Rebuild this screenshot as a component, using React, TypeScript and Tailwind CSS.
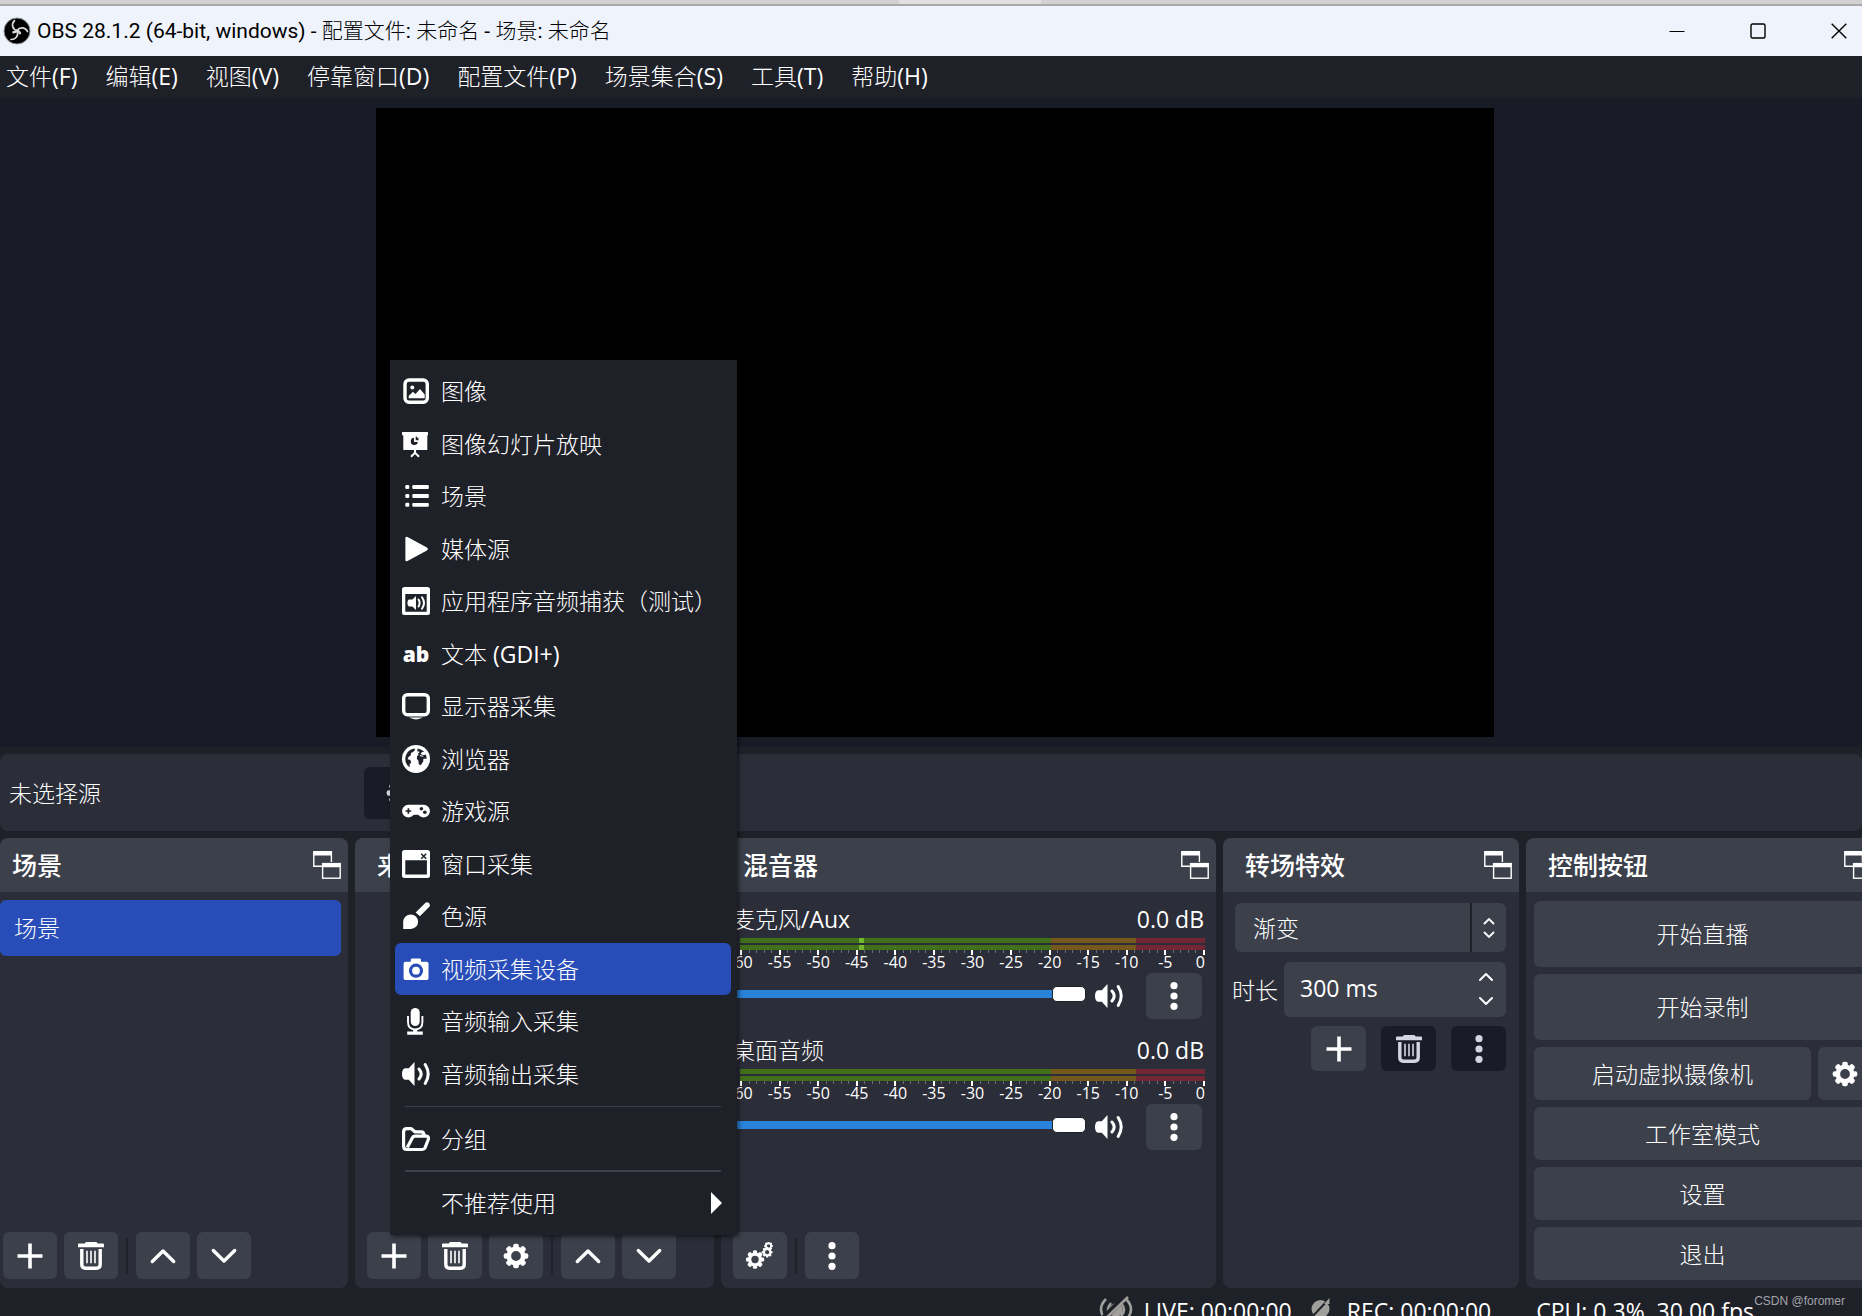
import { useState, type ReactNode } from 'react'

const MENUS = ['文件(F)', '编辑(E)', '视图(V)', '停靠窗口(D)', '配置文件(P)', '场景集合(S)', '工具(T)', '帮助(H)']

const SCALE = Array.from({ length: 13 }, (_, i) => i * 5 - 60)
const TICKS = Array.from({ length: 61 }, (_, i) => i)
const TEETH = [0, 45, 90, 135, 180, 225, 270, 315]

/* ---------- icons ---------- */

function Svg({ children, className = 'h-7 w-7' }: { children: ReactNode; className?: string }) {
  return (
    <svg viewBox="0 0 28 28" className={`shrink-0 ${className}`} fill="currentColor" aria-hidden="true">
      {children}
    </svg>
  )
}

function ObsLogo() {
  return (
    <svg viewBox="0 0 28 28" className="h-7 w-7 shrink-0" aria-hidden="true">
      <circle cx="14" cy="14" r="13" fill="#000" stroke="#8b8b8b" />
      <g fill="none" stroke="#dcdcdc" strokeWidth="1.7" strokeLinecap="round">
        <path d="M11.500 3.600C8 7 9.400 12.500 14 13.600M14 13.600C17 9.500 22.500 10 24.500 14.500M14 13.600C16 18.500 13 22.500 8 22.500" />
        <path d="M14 13.600q-1 1.500-3.500 1.700M14 13.600q2 .3 3 2.600" strokeWidth="2.400" />
      </g>
    </svg>
  )
}

const Popout = () => (
  <Svg>
    <g fill="none" stroke="currentColor" strokeWidth="1.4">
      <path d="M9 15.3H.8V.8h17.6V11" />
      <rect x="9.6" y="12.6" width="17.6" height="14.6" />
    </g>
    <path d="M.5.5h18v4H.5zM9.5 12h18v4.300h-18z" />
  </Svg>
)

const Plus = () => (
  <Svg>
    <path d="M12.200 1.500h3.600v10.700h10.700v3.600H15.800v10.700h-3.600V15.800H1.500v-3.600h10.700z" />
  </Svg>
)

const Trash = () => (
  <Svg>
    <path d="M9 0h10.500l1.200 1.600H26a1 1 0 0 1 1 1v2.600H1V2.600a1 1 0 0 1 1-1h5.800z" />
    <path d="M4.800 7v15.500q0 3.700 3.700 3.700h11q3.700 0 3.700-3.700V7" fill="none" stroke="currentColor" strokeWidth="3.400" />
    <path d="M10 8.700v12.500M14 8.700v12.500M18 8.700v12.500" stroke="currentColor" strokeWidth="1.600" />
  </Svg>
)

const GearShape = () => (
  <>
    <circle cx="14" cy="14" r="7.200" fill="none" stroke="currentColor" strokeWidth="4.600" />
    {TEETH.map((r) => (
      <rect key={r} x="11.200" y="1.700" width="5.600" height="5" rx="2" transform={`rotate(${r} 14 14)`} />
    ))}
  </>
)

const Gear = () => (
  <Svg>
    <GearShape />
  </Svg>
)

const Gears = () => (
  <Svg>
    <g transform="translate(-1.500 7) scale(.75)"><GearShape /></g>
    <g transform="translate(15 4) scale(.44)"><GearShape /></g>
    <g transform="translate(17.500 -1) scale(.36)"><GearShape /></g>
  </Svg>
)

const ChevronUp = () => (
  <Svg>
    <path d="M3.300 19.500 14 9l10.700 10.500" fill="none" stroke="currentColor" strokeWidth="3.400" strokeLinecap="round" strokeLinejoin="round" />
  </Svg>
)

const ChevronDown = () => (
  <Svg>
    <path d="M3.300 8.500 14 19l10.700-10.500" fill="none" stroke="currentColor" strokeWidth="3.400" strokeLinecap="round" strokeLinejoin="round" />
  </Svg>
)

const Dots = () => (
  <Svg>
    <circle cx="14" cy="3.700" r="3.600" />
    <circle cx="14" cy="14" r="3.600" />
    <circle cx="14" cy="24.300" r="3.600" />
  </Svg>
)

const Speaker = () => (
  <Svg>
    <path d="M12.500 2v24L6.800 19.800H3.200Q0 19.300 0 14t3.200-5.800h3.600z" />
    <path d="M17 9q4.400 5 0 10M23.200 4.500q6 9.500 0 19" fill="none" stroke="currentColor" strokeWidth="3" strokeLinecap="round" />
  </Svg>
)

const ImageIcon = () => (
  <Svg>
    <rect x="3" y="3" width="22.300" height="22.300" rx="4" fill="none" stroke="currentColor" strokeWidth="3.400" />
    <circle cx="10.300" cy="10.600" r="2" />
    <path d="M6.700 21.300v-2.400l4.200-4.200 2.600 2.300 4.500-5 4.700 5.600v3.700z" />
  </Svg>
)

const Slideshow = () => (
  <Svg>
    <path d="M0 2.600Q0 2 .6 2h24.800q.6 0 .6.600v2.700h-.7V20H1.300V5.300H0z" />
    <path d="M13 20v3.600M13 22.800 9 26.800M13 22.800l4 4" stroke="currentColor" strokeWidth="2" fill="none" />
    <path d="M12 7.800a3.600 3.600 0 1 0 3.900 4.200H12z" fill="#1f2129" />
    <path d="M13.700 10.300V6.500h1.200v1.200h1.600v2.600z" fill="#1f2129" />
  </Svg>
)

const ListIcon = () => (
  <Svg>
    {[5, 14, 22.8].map((y) => (
      <g key={y}>
        <rect x="3.300" y={y - 2} width="4" height="4" rx="1.300" />
        <rect x="10.300" y={y - 1.9} width="16.500" height="3.800" rx="1" />
      </g>
    ))}
  </Svg>
)

const PlayIcon = () => (
  <Svg>
    <path d="M3.400 3.300Q3.400 1 5.500 2.100l19.400 10.500q1.900 1.400 0 2.800L5.500 25.900q-2.100 1.100-2.100-1.200z" />
  </Svg>
)

const AppAudio = () => (
  <Svg>
    <path fillRule="evenodd" d="M2.500 0h23A2.500 2.500 0 0 1 28 2.500v23a2.500 2.500 0 0 1-2.500 2.500h-23A2.500 2.500 0 0 1 0 25.500v-23A2.500 2.500 0 0 1 2.500 0zM3.300 7v17.800h21.400V7z" />
    <path d="M14 9v14l-3.600-3.400H6.800Q5.400 19 5.400 16t1.400-3.500h3.600z" />
    <path d="M16.500 12.500q2.300 3.500 0 7M20 10.300q4 5.700 0 11.400" fill="none" stroke="currentColor" strokeWidth="2" strokeLinecap="round" />
  </Svg>
)

const TextIcon = () => (
  <span aria-hidden="true" className="flex h-7 w-7 shrink-0 items-center justify-center font-['Open_Sans'] text-[21px] leading-7 font-extrabold">
    ab
  </span>
)

const Display = () => (
  <Svg>
    <rect x="1.700" y="2.700" width="24.600" height="20" rx="3.600" fill="none" stroke="currentColor" strokeWidth="3.400" />
    <path d="M7 25.600h14q-7 3.600-14 0z" />
  </Svg>
)

const Globe = () => (
  <Svg>
    <circle cx="14" cy="14" r="14" />
    <path
      fill="#1f2129"
      d="M9.700 4.300 12.500 3.400l.6 1.600-2.300 2.300-1.700.5-.4 2.500-2.400 1.900-.6 2 2.700.7.800 2.700-1.600 1.700.1 3.300Q3.300 19.300 3.300 14q.3-7 6.400-9.700z"
    />
    <path
      fill="#1f2129"
      d="M15.500 3.400q4.300.6 6.700 3.400l-2.500.5-1 1.700 2.600 1.300 2.400-.9q.9 2 .9 4.300l-3.200.1-.2 2.700-2.400 3.700-2.100-.9-.2-3.600-1.700-2 .3-2.800 1.500-1.200-1.300-2.400z"
    />
    <circle cx="16.200" cy="7.300" r="1.100" />
    <path d="m17.800 10.500 3.400.8" stroke="#fff" strokeWidth="1" />
  </Svg>
)

const Gamepad = () => (
  <Svg>
    <path d="M6.500 7.800h15a6.300 6.300 0 1 1-4.400 10.700q-.8-.8-1.500-.8h-3.200q-.7 0-1.500.8A6.300 6.300 0 1 1 6.500 7.800z" />
    <path d="M6.400 11.200v5.600M3.600 14h5.600" stroke="#1f2129" strokeWidth="1.700" />
    <circle cx="19.400" cy="11.800" r="1.800" fill="#1f2129" />
    <circle cx="22.800" cy="15.200" r="1.800" fill="#1f2129" />
  </Svg>
)

const WindowIcon = () => (
  <Svg>
    <path fillRule="evenodd" d="M2.500 0h23A2.500 2.500 0 0 1 28 2.500v23a2.500 2.500 0 0 1-2.500 2.500h-23A2.500 2.500 0 0 1 0 25.500v-23A2.500 2.500 0 0 1 2.500 0zM3.300 10.200v14.300h21.600V10.200z" />
    <path d="m19.200 3.800 5 5M24.200 3.800l-5 5" stroke="#1f2129" strokeWidth="1.500" />
  </Svg>
)

const Brush = () => (
  <Svg>
    <path d="M23.500.8q1.700-1.200 3.400.3 1.700 1.700.5 3.600l-9.500 9.500-4.200-3.700z" />
    <path d="M1.200 27V19.600a7.500 7.500 0 0 1 7.600-7.200 7.300 7.300 0 0 1 0 14.600z" />
  </Svg>
)

const Camera = () => (
  <Svg>
    <path d="M3.500 6.700h5.300V4.600q0-1.200 1.300-1.200h7.600q1.300 0 1.300 1.200v2.100h5.500q2 0 2 1.900v14.600q0 1.900-2 1.900h-21q-1.900 0-1.900-1.900V8.600q0-1.900 1.900-1.900z" />
    <circle cx="14" cy="15.700" r="5.500" fill="none" stroke="#284cb8" strokeWidth="3.200" />
  </Svg>
)

const Mic = () => (
  <Svg>
    <rect x="8.700" y="1" width="9" height="18" rx="4.500" />
    <path d="M6 9v6q0 7.400 7.200 7.400T20.400 15V9" fill="none" stroke="currentColor" strokeWidth="1.900" />
    <path d="M11.200 22h4v2.600h5.600v3.100H5.200v-3.100h6z" />
  </Svg>
)

const Folder = () => (
  <Svg>
    <g fill="none" stroke="currentColor" strokeWidth="3.200" strokeLinejoin="round">
      <path d="M5 24.500q-3.400 0-3.400-3.300V6.800q0-3.200 3.200-3.200h4.500l3.600 3.200h6.300q2.800 0 2.800 3.600" />
      <path d="M4.500 24.500h15.900q1.900 0 2.700-1.900l3.200-8.100q.7-3-1.700-3.300H13.300q-2 0-3 1.700L5.300 22.500" />
    </g>
  </Svg>
)

/* ---------- source menu ---------- */

const SOURCES = [
  { label: '图像', icon: ImageIcon },
  { label: '图像幻灯片放映', icon: Slideshow },
  { label: '场景', icon: ListIcon },
  { label: '媒体源', icon: PlayIcon },
  { label: '应用程序音频捕获（测试）', icon: AppAudio },
  { label: '文本 (GDI+)', icon: TextIcon },
  { label: '显示器采集', icon: Display },
  { label: '浏览器', icon: Globe },
  { label: '游戏源', icon: Gamepad },
  { label: '窗口采集', icon: WindowIcon },
  { label: '色源', icon: Brush },
  { label: '视频采集设备', icon: Camera },
  { label: '音频输入采集', icon: Mic },
  { label: '音频输出采集', icon: Speaker },
]

function SourceMenu() {
  const [active, setActive] = useState('视频采集设备')
  return (
    <div role="menu" className="absolute bottom-[53px] left-[35px] z-20 w-[347px] bg-[#1f2129] pt-[5px] pr-[6px] pb-[6px] pl-[5px] shadow-[2px_2px_4px_rgba(0,0,0,0.5)]">
      <div className="flex h-[735px] flex-col">
        {SOURCES.map(({ label, icon: Icon }) => (
          <button
            key={label}
            role="menuitem"
            onMouseEnter={() => setActive(label)}
            className={`flex flex-1 items-center gap-[11px] rounded-md pl-[7px] text-left ${label === active ? 'bg-[#284cb8]' : ''}`}
          >
            <Icon />
            {label}
          </button>
        ))}
      </div>
      <hr className="mx-[10px] my-[6px] border-[#3c404b]" />
      <button role="menuitem" className="flex h-[52px] w-full items-center gap-[11px] pl-[7px]">
        <Folder />
        分组
      </button>
      <hr className="mx-[10px] my-[5px] border-t-2 border-[#3c404b]" />
      <button role="menuitem" className="flex h-[52px] w-full items-center justify-between pr-[9px] pl-[46px]">
        不推荐使用
        <svg viewBox="0 0 11 22" className="h-[22px] w-[11px]" fill="currentColor" aria-hidden="true">
          <path d="M0 0 11 11 0 22z" />
        </svg>
      </button>
    </div>
  )
}

/* ---------- building blocks ---------- */

function Dock({ title, indent = 'pl-[22px]', children }: { title: string; indent?: string; children: ReactNode }) {
  return (
    <section className="relative flex min-w-0 flex-col rounded-lg bg-[#2b2d38]">
      <header className={`flex h-[54px] shrink-0 items-center justify-between rounded-t-lg bg-[#3c404b] pr-[7px] ${indent}`}>
        <h2 className="font-['Open_Sans','Noto_Sans_CJK_SC',sans-serif] text-[25px] font-medium">{title}</h2>
        <button aria-label={`${title} 浮动`}>
          <Popout />
        </button>
      </header>
      {children}
    </section>
  )
}

function ToolButton({ label, children }: { label: string; children: ReactNode }) {
  return (
    <button aria-label={label} className="flex h-[47px] w-[54px] items-center justify-center rounded-md bg-[#3c404b]">
      {children}
    </button>
  )
}

const Divider = () => <span className="mx-px h-9 w-[2px] bg-[#1f2129]" />

function Channel({ name, peak }: { name: string; peak?: boolean }) {
  return (
    <div>
      <div className="flex h-[30px] items-center justify-between pr-[12px] pl-[11px]">
        <span>{name}</span>
        <span>0.0 dB</span>
      </div>
      <div className="mt-1 pr-[11px] pl-[19px]">
        <div className="flex flex-col gap-[2px]">
          {[0, 1].map((bar) => (
            <div key={bar} className="flex h-[5px]">
              <span className="flex flex-[312]">
                <span className="flex-[119] bg-[#42701a]" />
                <span className={`flex-[5] ${peak ? 'bg-[#72b930]' : 'bg-[#42701a]'}`} />
                <span className="flex-[188] bg-[#42701a]" />
              </span>
              <span className="flex-[85] bg-[#75591c]" />
              <span className="flex-[69] bg-[#732734]" />
            </div>
          ))}
        </div>
        <div className="flex h-[5px] items-start justify-between">
          {TICKS.map((t) => (
            <span key={t} className={t % 5 === 0 ? 'h-[5px] w-[2px] bg-white' : 'h-[3px] w-px bg-[#6a6c74]'} />
          ))}
        </div>
        <div className="flex h-[16px] justify-between text-[16px] leading-[14px]">
          {SCALE.map((db) => (
            <span key={db} className={`flex w-[2px] ${db === 0 ? 'justify-end' : 'justify-center'}`}>
              {db}
            </span>
          ))}
        </div>
      </div>
      <div className="mt-[2px] flex h-[46px] items-center pr-[14px] pl-[11px]">
        <input
          type="range"
          defaultValue={100}
          aria-label={`${name} 音量`}
          className="mb-1 h-4 min-w-0 flex-1 appearance-none bg-transparent [&::-webkit-slider-runnable-track]:h-2 [&::-webkit-slider-runnable-track]:rounded-sm [&::-webkit-slider-runnable-track]:bg-[#2a82da] [&::-webkit-slider-thumb]:-mt-[4px] [&::-webkit-slider-thumb]:h-4 [&::-webkit-slider-thumb]:w-[34px] [&::-webkit-slider-thumb]:appearance-none [&::-webkit-slider-thumb]:rounded-[5px] [&::-webkit-slider-thumb]:border [&::-webkit-slider-thumb]:border-[#1f2129] [&::-webkit-slider-thumb]:bg-white"
        />
        <button aria-label={`${name} 静音`} className="ml-[9px]">
          <Speaker />
        </button>
        <button aria-label={`${name} 选项`} className="ml-[23px] flex h-[46px] w-14 items-center justify-center rounded-md bg-[#3c404b]">
          <Dots />
        </button>
      </div>
    </div>
  )
}

function ControlButton({ tall, children }: { tall?: boolean; children: ReactNode }) {
  return (
    <button className={`w-full shrink-0 rounded-md bg-[#3c404b] ${tall ? 'h-[66px]' : 'h-[53px]'}`}>{children}</button>
  )
}

export default function App() {
  const [duration, setDuration] = useState('300 ms')

  return (
    <div className="relative flex h-screen min-h-[1100px] flex-col overflow-hidden bg-[#1f2129] font-['Open_Sans','Noto_Sans_CJK_SC_Light','Noto_Sans_CJK_SC',sans-serif] text-[23px] leading-[30px] text-white">
      {/* edge of the window behind */}
      <div className="flex h-[6px] shrink-0 justify-center border-b-2 border-[#a9a9a9] bg-[#d1d1d1]">
        <span className="ml-[78px] w-[142px] bg-[#e0e0e0]" />
      </div>

      <header className="flex h-[50px] shrink-0 items-center bg-[#eff3fb] pl-[3px] text-[21px] text-black">
        <ObsLogo />
        <h1 className="ml-[6px] flex-1 font-[Roboto,'Noto_Sans_CJK_SC_Light','Noto_Sans_CJK_SC',sans-serif]">OBS 28.1.2 (64-bit, windows) - 配置文件: 未命名 - 场景: 未命名</h1>
        <div className="flex items-center gap-[65px] pr-[15px]">
          <button aria-label="最小化">
            <svg viewBox="0 0 16 16" className="h-4 w-4" stroke="#000" aria-hidden="true"><path d="M.5 8.500h15" /></svg>
          </button>
          <button aria-label="最大化">
            <svg viewBox="0 0 16 16" className="h-4 w-4" fill="none" stroke="#000" strokeWidth="1.400" aria-hidden="true"><rect x="1" y="1" width="14" height="14" rx="1.500" /></svg>
          </button>
          <button aria-label="关闭">
            <svg viewBox="0 0 16 16" className="h-4 w-4" stroke="#000" strokeWidth="1.400" aria-hidden="true"><path d="m.7.7 14.600 14.600M15.300.7.7 15.300" /></svg>
          </button>
        </div>
      </header>

      <nav className="flex h-[42px] shrink-0 items-center gap-[28px] pb-[2px] pl-[6px]">
        {MENUS.map((m) => (
          <button key={m}>{m}</button>
        ))}
      </nav>

      {/* Preview */}
      <main className="-mr-2 flex min-h-0 flex-1 justify-center bg-[#191b26] py-[10px]">
        <div className="aspect-video h-full bg-black" />
      </main>

      {/* Source toolbar */}
      <div className="mt-[7px] flex h-[77px] shrink-0 items-center rounded-lg bg-[#2b2d38] pl-[9px]">
        <span className="w-[355px]">未选择源</span>
        <button disabled aria-label="属性" className="flex h-[52px] w-[100px] items-center rounded-md bg-[#191b26] pl-[21px] text-[#d3d6e2]">
          <Gear />
        </button>
      </div>

      {/* Docks, the last one runs past the window edge */}
      <div className="mt-[7px] -mr-[17px] grid h-[450px] shrink-0 grid-cols-[348fr_359fr_495fr_296fr_353fr] gap-[7px]">
        <Dock title="场景" indent="pl-[12px]">
          <ul className="flex-1 pt-[8px] pr-[7px]">
            <li className="flex h-14 items-center rounded-md bg-[#284cb8] pl-[14px]">场景</li>
          </ul>
          <div className="flex items-center gap-[7px] pb-[9px] pl-[3px]">
            <ToolButton label="添加场景"><Plus /></ToolButton>
            <ToolButton label="删除场景"><Trash /></ToolButton>
            <Divider />
            <ToolButton label="上移场景"><ChevronUp /></ToolButton>
            <ToolButton label="下移场景"><ChevronDown /></ToolButton>
          </div>
        </Dock>

        <Dock title="来源">
          <div className="flex-1" />
          <div className="flex items-center gap-[7px] pb-[9px] pl-[12px]">
            <ToolButton label="添加来源"><Plus /></ToolButton>
            <ToolButton label="删除来源"><Trash /></ToolButton>
            <ToolButton label="来源属性"><Gear /></ToolButton>
            <Divider />
            <ToolButton label="上移来源"><ChevronUp /></ToolButton>
            <ToolButton label="下移来源"><ChevronDown /></ToolButton>
          </div>
          <SourceMenu />
        </Dock>

        <Dock title="混音器">
          <div className="flex flex-1 flex-col gap-4 pt-[12px]">
            <Channel name="麦克风/Aux" peak />
            <Channel name="桌面音频" />
          </div>
          <div className="flex items-center gap-[7px] pb-[9px] pl-[12px]">
            <ToolButton label="高级音频属性"><Gears /></ToolButton>
            <Divider />
            <ToolButton label="混音器菜单"><Dots /></ToolButton>
          </div>
        </Dock>

        <Dock title="转场特效">
          <div className="flex flex-col pt-[11px] pr-[13px] pl-[12px]">
            <div className="relative">
              <select aria-label="转场" className="h-[49px] w-full appearance-none rounded-md bg-[#3c404b] pl-[18px]">
                <option>渐变</option>
              </select>
              <span className="pointer-events-none absolute inset-y-0 right-0 flex w-9 items-center justify-center border-l-2 border-[#1f2129]">
                <svg viewBox="0 0 12 20" className="h-5 w-3" fill="none" stroke="currentColor" strokeWidth="1.800" strokeLinecap="round" aria-hidden="true">
                  <path d="m1.500 5.500 4.500-4.500 4.500 4.500M1.500 14.500 6 19l4.500-4.500" />
                </svg>
              </span>
            </div>
            <div className="mt-[10px] -ml-[3px] flex h-[55px] items-center gap-[6px]">
              <label htmlFor="duration" className="shrink-0">时长</label>
              <div className="relative h-full min-w-0 flex-1">
                <input
                  id="duration"
                  value={duration}
                  onChange={(e) => setDuration(e.target.value)}
                  className="h-full w-full rounded-md bg-[#3c404b] pb-[4px] pl-[16px]"
                />
                <svg
                  viewBox="0 0 14 34"
                  className="pointer-events-none absolute top-[10px] right-[13px] h-[34px] w-[14px]"
                  fill="none"
                  stroke="currentColor"
                  strokeWidth="2"
                  strokeLinecap="round"
                  strokeLinejoin="round"
                  aria-hidden="true"
                >
                  <path d="m1 8 6-6 6 6M1 26l6 6 6-6" />
                </svg>
              </div>
            </div>
            <div className="mt-[9px] flex justify-end gap-[15px]">
              <button aria-label="添加转场" className="flex h-[45px] w-[55px] items-center justify-center rounded-md bg-[#3c404b]"><Plus /></button>
              <button aria-label="删除转场" disabled className="flex h-[45px] w-[55px] items-center justify-center rounded-md bg-[#191b26] text-[#d3d6e2]"><Trash /></button>
              <button aria-label="转场选项" disabled className="flex h-[45px] w-[55px] items-center justify-center rounded-md bg-[#191b26] text-[#d3d6e2]"><Dots /></button>
            </div>
          </div>
        </Dock>

        <Dock title="控制按钮">
          <div className="flex flex-col gap-[7px] px-[8px] pt-[9px]">
            <ControlButton tall>开始直播</ControlButton>
            <ControlButton tall>开始录制</ControlButton>
            <div className="flex gap-[7px]">
              <button className="h-[53px] flex-1 rounded-md bg-[#3c404b]">启动虚拟摄像机</button>
              <button aria-label="虚拟摄像机设置" className="flex h-[53px] w-[53px] items-center justify-center rounded-md bg-[#3c404b]"><Gear /></button>
            </div>
            <ControlButton>工作室模式</ControlButton>
            <ControlButton>设置</ControlButton>
            <ControlButton>退出</ControlButton>
          </div>
        </Dock>
      </div>

      {/* Status bar */}
      <footer className="relative flex h-7 shrink-0 items-start justify-end overflow-hidden pt-[8px] pr-[108px]">
        <svg viewBox="0 0 34 28" className="h-7 w-[34px] text-[#a09f9b]" fill="none" stroke="currentColor" strokeWidth="2.500" aria-hidden="true">
          <path d="M7 3q-10 10 0 21M12 7q-6 7 0 13M27 3q10 10 0 21M22 7q6 7 0 13" />
          <circle cx="17" cy="14" r="5.500" fill="currentColor" />
          <path d="M3 24 27 0" stroke="#1f2129" strokeWidth="6" />
          <path d="M4 25 29 1" strokeWidth="2.500" />
        </svg>
        <span className="ml-[11px]">LIVE: 00:00:00</span>
        <svg viewBox="0 0 20 28" className="ml-[19px] h-7 w-5 text-[#a09f9b]" fill="currentColor" aria-hidden="true">
          <circle cx="9.500" cy="13" r="9" />
          <path d="M0 22 18 3" stroke="#1f2129" strokeWidth="2" />
          <path d="M13 8 18.500 2v6z" />
        </svg>
        <span className="ml-[16px]">REC: 00:00:00</span>
        <span className="ml-[45px] whitespace-pre">CPU: 0.3%, 30.00 fps</span>
        <span className="absolute top-[4px] right-[17px] font-['Liberation_Sans'] text-[12px] leading-[18px] text-[#a3a4a9]">CSDN @foromer</span>
      </footer>
    </div>
  )
}
